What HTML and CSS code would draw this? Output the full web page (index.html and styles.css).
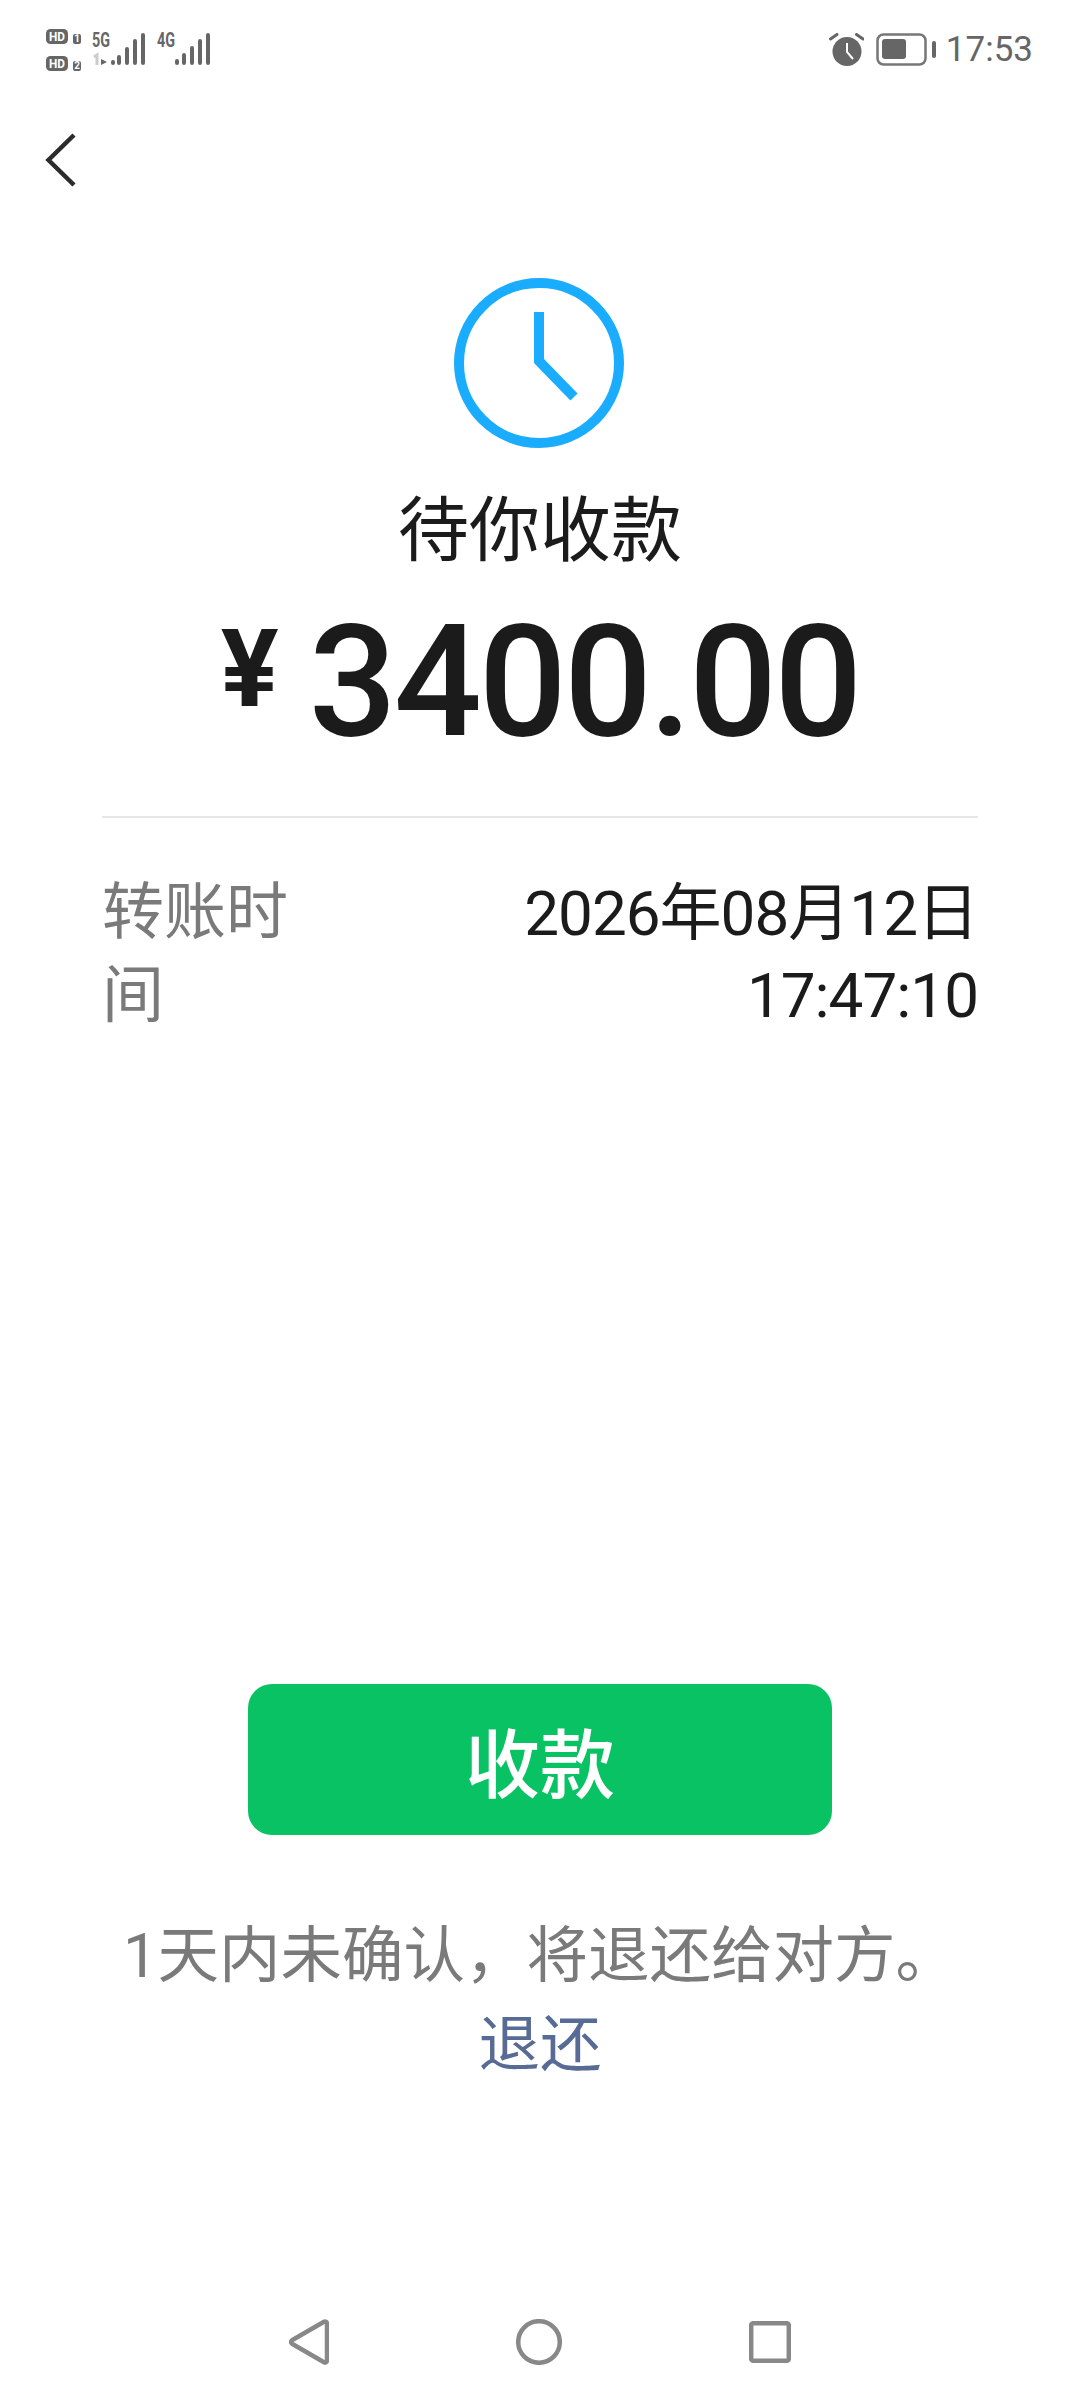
FILE: index.html
```html
<!DOCTYPE html>
<html lang="zh">
<head>
<meta charset="utf-8">
<title>待你收款</title>
<link rel="stylesheet" href="styles.css">
</head>
<body>
<div class="page">
  <header class="status">
    <svg class="signals" width="170" height="46" viewBox="0 0 170 46">
      <rect x="0" y="3" width="22" height="15" rx="4.500" fill="#666"/>
      <rect x="0" y="30" width="22" height="15" rx="4.500" fill="#666"/>
      <rect x="27" y="8" width="8" height="10" rx="2" fill="#666"/>
      <rect x="27" y="35" width="8" height="10" rx="2" fill="#666"/>
      <text class="hd" x="11" y="15" textLength="16" lengthAdjust="spacingAndGlyphs">HD</text>
      <text class="hd" x="11" y="42" textLength="16" lengthAdjust="spacingAndGlyphs">HD</text>
      <text class="hd-n" x="31" y="16">1</text>
      <text class="hd-n" x="31" y="43">2</text>
      <text class="net" x="46" y="21" textLength="18" lengthAdjust="spacingAndGlyphs">5G</text>
      <text class="net" x="111" y="21" textLength="18" lengthAdjust="spacingAndGlyphs">4G</text>
      <path d="M48 31l3-2v10" fill="none" stroke="#ccc" stroke-width="3"/>
      <path d="M55 33l6 3-6 3z" fill="#666"/>
      <g fill="none" stroke="#666" stroke-width="4" stroke-linecap="round">
        <path d="M67 36v1M73 31v6M81 23v14M89 15v22M97 9v28"/>
        <path d="M131 35v2M138 29v8M146 22v15M154 15v22M162 9v28"/>
      </g>
    </svg>
    <div class="status-right">
      <svg class="alarm" width="35" height="33" viewBox="0 0 35 33"><circle cx="18" cy="18.500" r="14.500" fill="#666"/><path d="M1.500 6L8 1.500M34 6L27.500 1.500" stroke="#666" stroke-width="3" stroke-linecap="round"/><path d="M18 10v9l6 7" stroke="#fff" stroke-width="2" fill="none"/></svg>
      <svg width="60" height="33" viewBox="0 0 60 33"><rect x="1.500" y="1.500" width="48" height="30" rx="6" fill="none" stroke="#777" stroke-width="2.500"/><rect x="6" y="6" width="24" height="20" rx="3" fill="#666"/><rect x="56" y="8" width="4" height="17" rx="2" fill="#666"/></svg>
      <span class="time">17:53</span>
    </div>
  </header>

  <nav class="topbar">
    <svg width="32" height="56" viewBox="0 0 32 56"><path d="M29 3L3.500 28 29 53" fill="none" stroke="#2b2b2b" stroke-width="4.500"/></svg>
  </nav>

  <main class="main">
    <svg class="clock" width="170" height="170" viewBox="0 0 170 170"><circle cx="85" cy="85" r="80" fill="none" stroke="#1aadff" stroke-width="10"/><path d="M85 34v49l35 36" fill="none" stroke="#1aadff" stroke-width="10"/></svg>
    <h1 class="title">待你收款</h1>
    <div class="amount"><span class="yen">¥</span><span class="num">3400.00</span></div>
    <div class="divider"></div>
    <div class="row">
      <div class="row-label">转账时间</div>
      <div class="row-value">2026年08月12日<br>17:47:10</div>
    </div>
  </main>

  <section class="actions">
    <button class="btn">收款</button>
    <p class="note">1天内未确认，将退还给对方。</p>
    <a class="link">退还</a>
  </section>

  <footer class="navbar">
    <svg width="40" height="46" viewBox="0 0 40 46"><path d="M38 4.500v37a2 2 0 0 1-3 1.700L3 24.700a2 2 0 0 1 0-3.400L35 2.800a2 2 0 0 1 3 1.700z" fill="none" stroke="#888" stroke-width="4.500" stroke-linejoin="round"/></svg>
    <svg width="46" height="46" viewBox="0 0 46 46"><circle cx="23" cy="23" r="20.800" fill="none" stroke="#888" stroke-width="4.500"/></svg>
    <svg width="42" height="42" viewBox="0 0 42 42"><rect x="2.200" y="2.200" width="37.600" height="37.600" rx="2" fill="none" stroke="#888" stroke-width="4.500"/></svg>
  </footer>
</div>
</body>
</html>
```
FILE: styles.css
```css
* { box-sizing: border-box; }
html, body { margin: 0; padding: 0; background: #fff; }
.page {
  width: 1080px;
  height: 2400px;
  display: flex;
  flex-direction: column;
  font-family: Roboto, "Noto Sans CJK SC", sans-serif;
  color: #1b1b1b;
}
.status {
  height: 100px;
  padding: 26px 47px 0 46px;
  display: flex;
  justify-content: space-between;
  align-items: flex-start;
}
.signals { display: block; }
.hd { font: 700 13px Roboto, sans-serif; fill: #fff; text-anchor: middle; }
.hd-n { font: 700 10px Roboto, sans-serif; fill: #fff; text-anchor: middle; }
.net { font: 700 20px Roboto, sans-serif; fill: #666; }
.status-right { display: flex; align-items: center; gap: 10px; height: 46px; }
.alarm { margin-right: 2px; }
.time { font-size: 35px; color: #666; }
.topbar { height: 100px; padding: 32px 0 0 45px; display: flex; align-items: flex-start; }
.main {
  display: flex;
  flex-direction: column;
  align-items: center;
  padding: 78px 102px 0;
}
.clock { display: block; margin-right: 2px; }
.title {
  margin: 38px 0 0;
  font-size: 71px;
  font-weight: 400;
  line-height: 90px;
}
.amount {
  margin-top: 26px;
  height: 160px;
  font-weight: 500;
  line-height: 160px;
  white-space: nowrap;
}
.yen {
  font-size: 108px;
  font-weight: 700;
  line-height: 108px;
  vertical-align: 29px;
  margin-right: 30px;
}
.num { font-size: 155px; letter-spacing: -3px; }
.divider { align-self: stretch; height: 2px; background: #e6e6e6; margin-top: 54px; }
.row {
  align-self: stretch;
  display: flex;
  justify-content: space-between;
  margin-top: 53px;
  font-size: 62px;
  line-height: 83px;
}
.row-label { width: 190px; color: #7a7a7a; }
.row-value { margin-top: 2px; line-height: 82px; text-align: right; color: #1b1b1b; letter-spacing: -1px; }
.actions {
  margin-top: 647px;
  display: flex;
  flex-direction: column;
  align-items: center;
}
.btn {
  width: 584px;
  height: 151px;
  border: 0;
  border-radius: 24px;
  background: #09c263;
  color: #fff;
  font: 500 75px Roboto, "Noto Sans CJK SC", sans-serif;
}
.note { margin: 76px 0 0; font-size: 61.500px; line-height: 90px; color: #7a7a7a; }
.link { font-size: 61.500px; line-height: 88px; color: #576b95; }
.navbar {
  margin-top: auto;
  height: 116px;
  padding: 0 289px;
  display: flex;
  justify-content: space-between;
  align-items: center;
}
```
